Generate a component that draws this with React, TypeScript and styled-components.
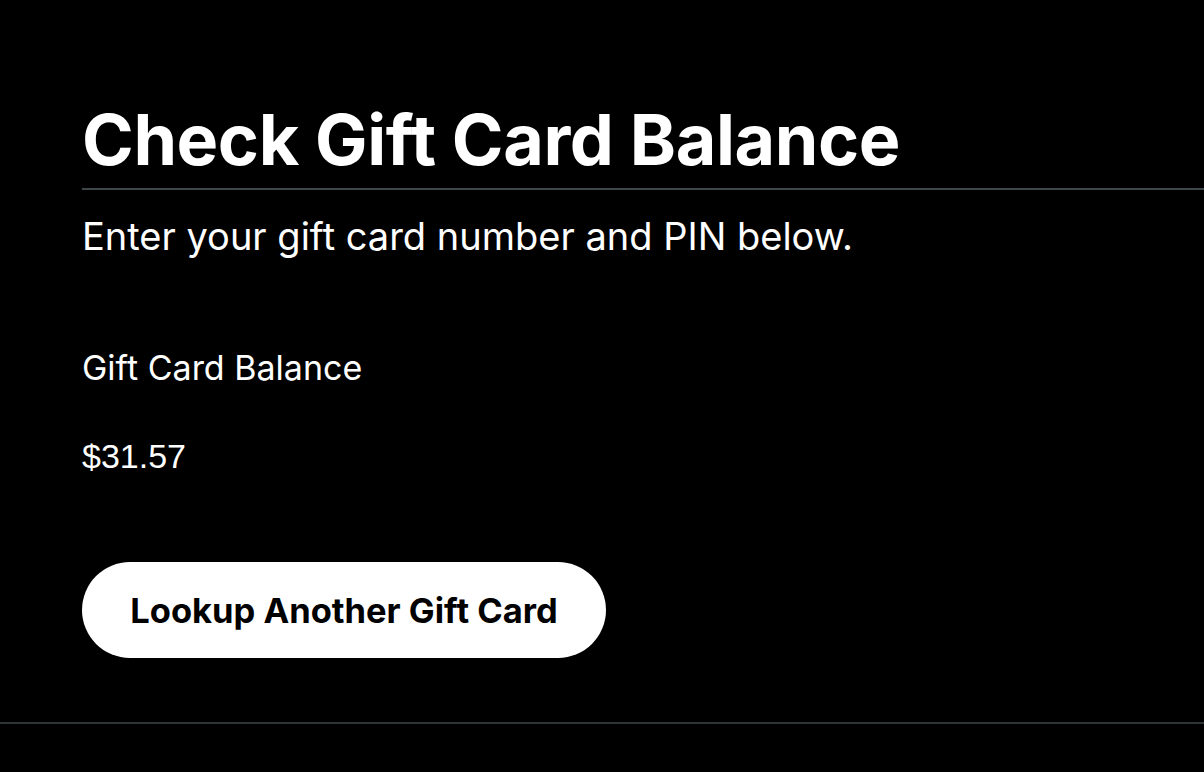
import React from 'react';
import styled, { createGlobalStyle } from 'styled-components';

const GlobalStyle = createGlobalStyle`
  html, body {
    margin: 0;
    padding: 0;
    background: #000000;
  }
  body {
    font-family: 'Inter', 'Liberation Sans', sans-serif;
    color: #ffffff;
  }
`;

const Page = styled.div`
  width: 1204px;
  height: 772px;
  background: #000000;
  overflow: hidden;
  padding-top: 100px;
  box-sizing: border-box;
`;

const Section = styled.section`
  padding-left: 82px;
`;

const Title = styled.h1`
  margin: 0;
  font-family: 'Inter', sans-serif;
  font-weight: 700;
  font-size: 70px;
  line-height: 80px;
  letter-spacing: -0.4px;
  color: #ffffff;
  padding-bottom: 8px;
  border-bottom: 2px solid #3f474b;
`;

const Subtitle = styled.p`
  margin: 0;
  padding-top: 22px;
  font-family: 'Inter', sans-serif;
  font-size: 38px;
  line-height: 48px;
  color: #ffffff;
`;

const BalanceLabel = styled.div`
  margin-top: 88px;
  font-family: 'Inter', sans-serif;
  font-size: 34px;
  line-height: 40px;
`;

const BalanceValue = styled.div`
  margin-top: 48px;
  font-family: 'Liberation Sans', Arial, sans-serif;
  font-size: 34px;
  line-height: 40px;
`;

const LookupButton = styled.button`
  margin-top: 86px;
  height: 96px;
  width: 524px;
  border: none;
  border-radius: 48px;
  background: #ffffff;
  color: #000000;
  font-family: 'Inter', sans-serif;
  font-weight: 700;
  font-size: 34.5px;
  cursor: pointer;
`;

const Divider = styled.hr`
  margin: 64px 0 0;
  border: none;
  height: 2px;
  background: #2f3437;
`;

const App: React.FC = () => {
  return (
    <Page>
      <GlobalStyle />
      <Section>
        <Title>Check Gift Card Balance</Title>
        <Subtitle>Enter your gift card number and PIN below.</Subtitle>
        <BalanceLabel>Gift Card Balance</BalanceLabel>
        <BalanceValue>$31.57</BalanceValue>
        <LookupButton>Lookup Another Gift Card</LookupButton>
      </Section>
      <Divider />
    </Page>
  );
};

export default App;
